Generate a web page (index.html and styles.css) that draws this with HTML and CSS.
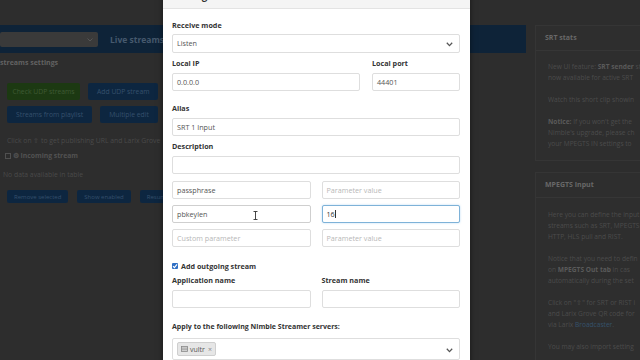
FILE: index.html
```html
<!DOCTYPE html>
<html>
<head>
<meta charset="utf-8">
<link rel="stylesheet" href="styles.css">
</head>
<body>
<div class="page">
  <main class="main">
    <div class="topbar">
      <div class="fake-select"><svg class="fs-chev" width="6" height="4" viewBox="0 0 6 4"><polyline points="0.5,0.5 3,3 5.5,0.5" fill="none" stroke="#555" stroke-width="1"/></svg></div>
      <span class="topbar-title">Live streams</span>
    </div>
    <div class="section-title">streams settings</div>
    <div class="btn-row first">
      <span class="bg-btn green">Check UDP streams</span>
      <span class="bg-btn blue">Add UDP stream</span>
    </div>
    <div class="btn-row">
      <span class="bg-btn blue">Streams from playlist</span>
      <span class="bg-btn blue">Multiple edit</span>
    </div>
    <p class="bg-text hint">Click on ⇧ to get publishing URL and Larix Grove</p>
    <p class="bg-text incoming"><span class="bg-check"></span> ⚙ Incoming stream</p>
    <p class="bg-text nodata">No data available in table</p>
    <div class="btn-row small">
      <span class="bg-btn blue sm">Remove selected</span>
      <span class="bg-btn blue sm">Show enabled</span>
      <span class="bg-btn blue sm">Resume</span>
    </div>
  </main>
  <aside class="side">
    <section class="card c1">
      <h3 class="card-h">SRT stats</h3>
      <div class="card-b">
        <p>New UI feature: <b>SRT sender</b> stats<br>now available for active SRT</p>
        <p>Watch this short clip showin</p>
        <p><b>Notice:</b> If you won't get the<br>Nimble's upgrade, please ch<br>your MPEGTS IN settings to</p>
      </div>
    </section>
    <section class="card c2">
      <h3 class="card-h">MPEGTS Input</h3>
      <div class="card-b">
        <p>Here you can define the input<br>streams such as SRT, MPEGTS<br>HTTP, HLS pull and RIST.</p>
        <p>Notice that you need to defin<br>on <b>MPEGTS Out tab</b> in cas<br>automatically during the set</p>
        <p>Click on "⇧" for SRT or RIST i<br>and Larix Grove QR code for<br>via Larix <span class="lnk">Broadcaster</span>.</p>
        <p>You may also import setting</p>
      </div>
    </section>
  </aside>
</div>

<div class="modal">
  <div class="modal-head"><h4 class="modal-title">Settings</h4></div>
  <div class="modal-body">
    <label class="lbl">Receive mode</label>
    <div class="input select">Listen<svg class="chev" width="7" height="5" viewBox="0 0 7 5"><polyline points="0.8,0.8 3.5,3.6 6.2,0.8" fill="none" stroke="#555" stroke-width="1.3"/></svg></div>

    <div class="grid ip">
      <div>
        <label class="lbl">Local IP</label>
        <div class="input">0.0.0.0</div>
      </div>
      <div>
        <label class="lbl">Local port</label>
        <div class="input">44401</div>
      </div>
    </div>

    <label class="lbl alias">Alias</label>
    <div class="input">SRT 1 Input</div>

    <label class="lbl desc">Description</label>
    <div class="input"></div>

    <div class="params">
      <div class="input">passphrase</div>
      <div class="input ph">Parameter value</div>
      <div class="input hover">pbkeylen</div>
      <div class="input focus">16<span class="caret"></span></div>
      <div class="input ph">Custom parameter</div>
      <div class="input ph">Parameter value</div>
    </div>

    <div class="check-row"><span class="cbox"><svg width="6" height="6" viewBox="0 0 6 6"><polyline points="1,3.2 2.4,4.6 5,1.4" fill="none" stroke="#fff" stroke-width="1.2"/></svg></span><span class="check-lbl">Add outgoing stream</span></div>

    <div class="grid two">
      <div>
        <label class="lbl">Application name</label>
        <div class="input"></div>
      </div>
      <div>
        <label class="lbl">Stream name</label>
        <div class="input"></div>
      </div>
    </div>

    <label class="lbl apply">Apply to the following Nimble Streamer servers:</label>
    <div class="multi">
      <span class="tag"><svg width="7" height="6" viewBox="0 0 7 6"><rect x="0.5" y="0.5" width="6" height="5" fill="none" stroke="#888" stroke-width="0.8"/><line x1="0.5" y1="2.1" x2="6.5" y2="2.1" stroke="#888" stroke-width="0.8"/><line x1="0.5" y1="3.8" x2="6.5" y2="3.8" stroke="#888" stroke-width="0.8"/></svg>vultr<span class="x">×</span></span>
      <svg class="chev" width="7" height="5" viewBox="0 0 7 5"><polyline points="0.8,0.8 3.5,3.6 6.2,0.8" fill="none" stroke="#555" stroke-width="1.3"/></svg>
    </div>
  </div>
</div>

<svg class="ibeam" width="5" height="9" viewBox="0 0 5 9"><path d="M0.5,0.5 H4.5 M2.5,0.5 V8.5 M0.5,8.5 H4.5" fill="none" stroke="#333" stroke-width="0.9"/></svg>
</body>
</html>
```

FILE: styles.css
```css
* { box-sizing: border-box; }
html, body { margin: 0; padding: 0; }
body {
  width: 640px;
  height: 360px;
  overflow: hidden;
  background: #2d2d2d;
  font-family: "Open Sans", "Liberation Sans", sans-serif;
  position: relative;
}
p { margin: 0; }

/* dimmed background page */
.page {
  display: grid;
  grid-template-columns: 526px 1fr;
  column-gap: 9px;
  height: 360px;
}
.main { padding-top: 25px; }
.topbar {
  height: 28px;
  background: #0e2338;
  display: flex;
  align-items: center;
}
.fake-select {
  width: 98px;
  height: 15px;
  background: #3a3a3a;
  border-radius: 2px;
  position: relative;
}
.fs-chev { position: absolute; right: 5px; top: 6px; }
.topbar-title {
  margin-left: 12px;
  font-size: 8.5px;
  font-weight: 700;
  color: #46596d;
}
.section-title {
  margin-top: 4px;
  font-size: 7px;
  font-weight: 700;
  line-height: 11px;
  color: #626262;
}
.btn-row {
  display: flex;
  gap: 8px;
  padding-left: 7px;
  margin-top: 6px;
}
.btn-row.first { margin-top: 15px; }
.bg-btn {
  height: 17px;
  padding: 0 9px;
  display: flex;
  align-items: center;
  font-size: 6.8px;
  border-radius: 2px;
  white-space: nowrap;
}
.bg-btn.green { background: #1c3912; color: #3f5934; width: 73px; justify-content: center; }
.bg-btn.blue { background: #0d2640; color: #35506c; }
.btn-row.small { margin-top: 10px; gap: 9px; }
.bg-btn.sm { height: 13px; font-size: 6px; padding: 0 7px; }
.bg-text { font-size: 6.8px; line-height: 11px; color: #4a4a4a; white-space: nowrap; }
.hint { margin-top: 12px; padding-left: 7px; }
.incoming { margin-top: 4px; padding-left: 5px; font-weight: 700; color: #525252; }
.bg-check { display: inline-block; width: 6px; height: 6px; border: 1px solid #505050; vertical-align: -1px; }
.nodata { margin-top: 8px; padding-left: 3px; }

.side { padding-top: 25px; overflow: hidden; }
.card {
  border: 1px solid #353535;
  background: #2e2e2e;
  width: 140px;
}
.card-h {
  margin: 0;
  padding: 6px 9px 0;
  height: 25px;
  font-size: 7px;
  line-height: 11px;
  font-weight: 700;
  color: #686868;
  border-bottom: 1px solid #363636;
}
.card-b { padding: 10px 0 8px 12px; }
.card-b p {
  font-size: 6.6px;
  line-height: 11px;
  color: #4c4c4c;
  white-space: nowrap;
  margin-bottom: 11px;
}
.card-b p:last-child { margin-bottom: 0; }
.card-b b { color: #5a5a5a; }
.lnk { color: #35526b; }
.c1 { height: 136px; }
.c2 { margin-top: 11px; height: 200px; }
.c2 .card-b { padding-top: 11px; }

/* modal (overlay over the dimmed page) */
.modal {
  position: absolute;
  left: 163px;
  top: -30px;
  width: 307px;
  height: 400px;
  background: #fff;
  box-shadow: 0 0 6px rgba(0,0,0,0.5);
}
.modal-head {
  height: 39px;
  background: #f4f4f4;
  border-bottom: 1px solid #e3e3e3;
  padding: 0 9px;
  position: relative;
}
.modal-title {
  margin: 0;
  position: absolute;
  left: 9px;
  bottom: 8px;
  font-size: 10px;
  font-weight: 700;
  color: #333;
  line-height: 10px;
}
.modal-body { padding: 10.5px 10px 0 9px; }
.lbl {
  display: block;
  font-size: 7.2px;
  font-weight: 700;
  color: #333;
  line-height: 11px;
  margin-bottom: 3.5px;
  white-space: nowrap;
}
.input {
  height: 18.5px;
  border: 1px solid #dedede;
  border-radius: 2px;
  padding: 0 4px;
  font-size: 7.2px;
  color: #555;
  display: flex;
  align-items: center;
  position: relative;
  background: #fff;
}
.input.ph { color: #b8b8b8; }
.input.hover { border-color: #cfcfcf; }
.input.focus {
  border-color: #7eb2d8;
  box-shadow: 0 0 2px rgba(102,175,233,0.5);
  color: #333;
}
.caret { display: inline-block; width: 0.7px; height: 8px; background: #333; margin-left: 0.5px; }
.select .chev { position: absolute; right: 6px; top: 7px; }
.grid { display: grid; }
.grid.ip { grid-template-columns: 188px 1fr; column-gap: 12px; margin-top: 5.5px; }
.lbl.alias { margin-top: 12px; }
.lbl.desc { margin-top: 5px; }
.params {
  display: grid;
  grid-template-columns: 1fr 1fr;
  column-gap: 11px;
  row-gap: 5.5px;
  margin-top: 6.5px;
}
.check-row {
  margin-top: 13px;
  height: 11px;
  display: flex;
  align-items: center;
}
.cbox {
  width: 6px;
  height: 6px;
  background: #2f6fc4;
  border-radius: 1px;
  display: flex;
  align-items: center;
  justify-content: center;
}
.check-lbl { margin-left: 3px; font-size: 7.2px; font-weight: 700; color: #333; }
.grid.two { grid-template-columns: 1fr 1fr; column-gap: 11px; margin-top: 4px; }
.lbl.apply { margin-top: 13px; margin-bottom: 6px; font-size: 7px; }
.multi {
  height: 22px;
  border: 1px solid #dedede;
  border-radius: 2px;
  padding: 3.5px 4px;
  display: flex;
  align-items: center;
  position: relative;
}
.multi .chev { position: absolute; right: 6px; top: 9px; }
.tag {
  height: 14.5px;
  background: #e6e6e6;
  border: 1px solid #cfcfcf;
  border-radius: 2px;
  padding: 0 3px;
  display: flex;
  align-items: center;
  gap: 2px;
  font-size: 7px;
  color: #555;
}
.tag .x { color: #888; font-size: 7px; margin-left: 1px; }
.ibeam { position: absolute; left: 253px; top: 211px; }
```
